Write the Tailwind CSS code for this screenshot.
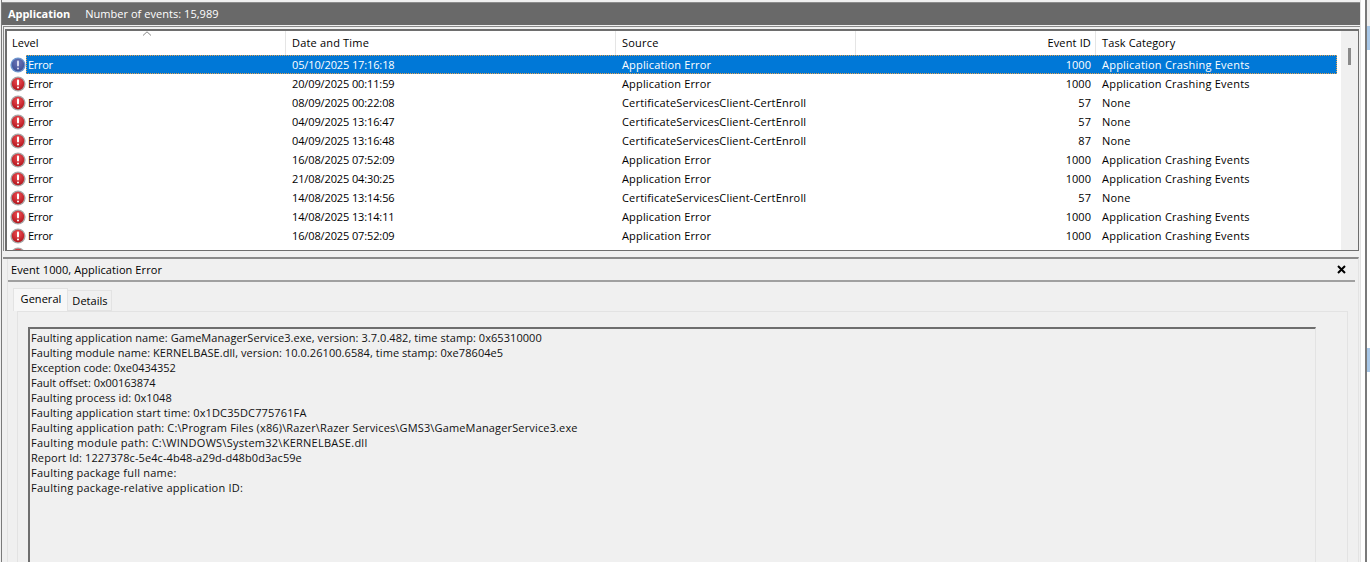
<!DOCTYPE html>
<html lang="en">

<head>
  <meta charset="UTF-8">
  <title>Application - Event Viewer</title>
  <script src="https://cdn.jsdelivr.net/npm/@tailwindcss/browser@4"></script>
</head>

<body class="w-[1370px] h-[562px] overflow-hidden bg-[#f0f0f0] text-[11px] tracking-[0.042px] leading-[15px] text-black font-['Open_Sans','Liberation_Sans',sans-serif]">
  <svg class="absolute w-0 h-0">
    <defs>
      <radialGradient id="red" cx="50%" cy="30%" r="70%">
        <stop offset="0" stop-color="#ee4f55" />
        <stop offset="1" stop-color="#b3141b" />
      </radialGradient>
      <radialGradient id="blue" cx="50%" cy="30%" r="70%">
        <stop offset="0" stop-color="#6c76b8" />
        <stop offset="1" stop-color="#3f4f94" />
      </radialGradient>
      <symbol id="err" viewBox="0 0 16 16">
        <circle cx="8" cy="8" r="7.6" fill="#a8a8a8" />
        <circle cx="8" cy="8" r="6.2" fill="url(#red)" />
        <rect x="7" y="3.4" width="2" height="6" rx="0.8" fill="#fff" />
        <rect x="7" y="10.6" width="2" height="2" rx="1" fill="#fff" />
      </symbol>
      <symbol id="err-sel" viewBox="0 0 16 16">
        <circle cx="8" cy="8" r="7.6" fill="#6f97cf" />
        <circle cx="8" cy="8" r="6.2" fill="url(#blue)" />
        <rect x="7" y="3.4" width="2" height="6" rx="0.8" fill="#dcdcf0" />
        <rect x="7" y="10.6" width="2" height="2" rx="1" fill="#dcdcf0" />
      </symbol>
    </defs>
  </svg>

  <div class="flex h-full">
    <div class="ml-[1px] w-[1360px] shrink-0 pt-[2px] border-l border-r border-l-[#7a7a7a] border-r-[#e3e3e3]">
      <!-- title bar -->
      <div class="h-[23px] w-[1358px] bg-[#696969] border-t border-[#8c8c8c] text-white flex items-center pl-[6px] pb-[2px] gap-[15px]">
        <span class="font-bold tracking-[-0.05px]">Application</span>
        <span>Number of events: 15,989</span>
      </div>

      <!-- event list -->
      <div class="mt-[1px] ml-[1px] w-[1357px] h-[225px] border-t border-l border-[#8a8a8a] pt-[2px] pl-[1px]">
        <div class="w-[1354px] h-[222px] border-2 border-[#6e6e6e] border-r border-b bg-white flex overflow-hidden">
          <div class="w-[1334px] shrink-0">
            <div class="relative h-[24px] flex items-center">
              <svg class="absolute left-[135px] top-0" width="10" height="5" viewBox="0 0 10 5" fill="none" stroke="#8a8a8a"><path d="M1 4.5 5 .8 9 4.5" /></svg>
              <div class="w-[279px] h-full pl-[5px] pb-[2px] flex items-center border-r border-[#e5e5e5]">Level</div>
              <div class="w-[330px] h-full pl-[6px] pb-[2px] flex items-center border-r border-[#e5e5e5] tracking-[0.18px]">Date and Time</div>
              <div class="w-[240px] h-full pl-[6px] pb-[2px] flex items-center border-r border-[#e5e5e5] tracking-[0.2px]">Source</div>
              <div class="w-[240px] h-full pr-[4px] pb-[2px] flex items-center justify-end border-r border-[#e5e5e5] tracking-[0.15px]">Event ID</div>
              <div class="pl-[6px] pb-[2px] tracking-[0.12px]">Task Category</div>
            </div>

            <div class="w-[1330px] h-[19px] flex items-center">
              <svg class="w-[16px] h-[16px] ml-[3px] shrink-0"><use href="#err-sel" /></svg>
              <div class="flex items-center h-full flex-1 bg-[#0078d7] text-white outline-1 -outline-offset-1 outline-dotted outline-[#e0a050]">
                <div class="w-[260px] pl-[2px] tracking-[-0.3px]">Error</div>
                <div class="w-[330px] pl-[6px] tracking-[-0.12px]">05/10/2025 17:16:18</div>
                <div class="w-[240px] pl-[6px] tracking-[0.16px]">Application Error</div>
                <div class="w-[240px] pr-[5px] text-right">1000</div>
                <div class="pl-[6px] tracking-[0.22px]">Application Crashing Events</div>
              </div>
            </div>

            <div class="h-[19px] flex items-center">
              <svg class="w-[16px] h-[16px] ml-[3px] shrink-0"><use href="#err" /></svg>
              <div class="w-[260px] pl-[2px] tracking-[-0.3px]">Error</div>
              <div class="w-[330px] pl-[6px] tracking-[-0.12px]">20/09/2025 00:11:59</div>
              <div class="w-[240px] pl-[6px] tracking-[0.16px]">Application Error</div>
              <div class="w-[240px] pr-[5px] text-right">1000</div>
              <div class="pl-[6px] tracking-[0.22px]">Application Crashing Events</div>
            </div>
            <div class="h-[19px] flex items-center">
              <svg class="w-[16px] h-[16px] ml-[3px] shrink-0"><use href="#err" /></svg>
              <div class="w-[260px] pl-[2px] tracking-[-0.3px]">Error</div>
              <div class="w-[330px] pl-[6px] tracking-[-0.12px]">08/09/2025 00:22:08</div>
              <div class="w-[240px] pl-[6px] tracking-[0.18px]">CertificateServicesClient-CertEnroll</div>
              <div class="w-[240px] pr-[5px] text-right">57</div>
              <div class="pl-[6px] tracking-[0.2px]">None</div>
            </div>
            <div class="h-[19px] flex items-center">
              <svg class="w-[16px] h-[16px] ml-[3px] shrink-0"><use href="#err" /></svg>
              <div class="w-[260px] pl-[2px] tracking-[-0.3px]">Error</div>
              <div class="w-[330px] pl-[6px] tracking-[-0.12px]">04/09/2025 13:16:47</div>
              <div class="w-[240px] pl-[6px] tracking-[0.18px]">CertificateServicesClient-CertEnroll</div>
              <div class="w-[240px] pr-[5px] text-right">57</div>
              <div class="pl-[6px] tracking-[0.2px]">None</div>
            </div>
            <div class="h-[19px] flex items-center">
              <svg class="w-[16px] h-[16px] ml-[3px] shrink-0"><use href="#err" /></svg>
              <div class="w-[260px] pl-[2px] tracking-[-0.3px]">Error</div>
              <div class="w-[330px] pl-[6px] tracking-[-0.12px]">04/09/2025 13:16:48</div>
              <div class="w-[240px] pl-[6px] tracking-[0.18px]">CertificateServicesClient-CertEnroll</div>
              <div class="w-[240px] pr-[5px] text-right">87</div>
              <div class="pl-[6px] tracking-[0.2px]">None</div>
            </div>
            <div class="h-[19px] flex items-center">
              <svg class="w-[16px] h-[16px] ml-[3px] shrink-0"><use href="#err" /></svg>
              <div class="w-[260px] pl-[2px] tracking-[-0.3px]">Error</div>
              <div class="w-[330px] pl-[6px] tracking-[-0.12px]">16/08/2025 07:52:09</div>
              <div class="w-[240px] pl-[6px] tracking-[0.16px]">Application Error</div>
              <div class="w-[240px] pr-[5px] text-right">1000</div>
              <div class="pl-[6px] tracking-[0.22px]">Application Crashing Events</div>
            </div>
            <div class="h-[19px] flex items-center">
              <svg class="w-[16px] h-[16px] ml-[3px] shrink-0"><use href="#err" /></svg>
              <div class="w-[260px] pl-[2px] tracking-[-0.3px]">Error</div>
              <div class="w-[330px] pl-[6px] tracking-[-0.12px]">21/08/2025 04:30:25</div>
              <div class="w-[240px] pl-[6px] tracking-[0.16px]">Application Error</div>
              <div class="w-[240px] pr-[5px] text-right">1000</div>
              <div class="pl-[6px] tracking-[0.22px]">Application Crashing Events</div>
            </div>
            <div class="h-[19px] flex items-center">
              <svg class="w-[16px] h-[16px] ml-[3px] shrink-0"><use href="#err" /></svg>
              <div class="w-[260px] pl-[2px] tracking-[-0.3px]">Error</div>
              <div class="w-[330px] pl-[6px] tracking-[-0.12px]">14/08/2025 13:14:56</div>
              <div class="w-[240px] pl-[6px] tracking-[0.18px]">CertificateServicesClient-CertEnroll</div>
              <div class="w-[240px] pr-[5px] text-right">57</div>
              <div class="pl-[6px] tracking-[0.2px]">None</div>
            </div>
            <div class="h-[19px] flex items-center">
              <svg class="w-[16px] h-[16px] ml-[3px] shrink-0"><use href="#err" /></svg>
              <div class="w-[260px] pl-[2px] tracking-[-0.3px]">Error</div>
              <div class="w-[330px] pl-[6px] tracking-[-0.12px]">14/08/2025 13:14:11</div>
              <div class="w-[240px] pl-[6px] tracking-[0.16px]">Application Error</div>
              <div class="w-[240px] pr-[5px] text-right">1000</div>
              <div class="pl-[6px] tracking-[0.22px]">Application Crashing Events</div>
            </div>
            <div class="h-[19px] flex items-center">
              <svg class="w-[16px] h-[16px] ml-[3px] shrink-0"><use href="#err" /></svg>
              <div class="w-[260px] pl-[2px] tracking-[-0.3px]">Error</div>
              <div class="w-[330px] pl-[6px] tracking-[-0.12px]">16/08/2025 07:52:09</div>
              <div class="w-[240px] pl-[6px] tracking-[0.16px]">Application Error</div>
              <div class="w-[240px] pr-[5px] text-right">1000</div>
              <div class="pl-[6px] tracking-[0.22px]">Application Crashing Events</div>
            </div>
            <div class="h-[19px] flex items-center">
              <svg class="w-[16px] h-[16px] ml-[3px] shrink-0"><use href="#err" /></svg>
            </div>
          </div>
          <!-- scrollbar -->
          <div class="w-[17px] bg-[#f0f0f0] pt-[17px] pl-[7px]">
            <div class="w-[3px] h-[17px] bg-[#8a8a8a]"></div>
          </div>
        </div>
      </div>

      <!-- event detail -->
      <div class="mt-[6px] ml-[1px] w-[1356px] h-[305px] border-t-2 border-r border-[#8a8a8a] border-r-[#e3e3e3] pl-[4px] overflow-hidden">
        <div class="h-full border-l border-[#e3e3e3]">
          <div class="flex items-center justify-between h-[21px] pl-[3px] pr-[12px]">
            <span class="tracking-[0.08px]">Event 1000, Application Error</span>
            <svg width="9" height="9" viewBox="0 0 9 9" stroke="#000" stroke-width="2"><path d="M1 1 8 8M8 1 1 8" /></svg>
          </div>
          <div class="w-[1347px] h-[2px] bg-[#a0a0a0]"></div>

          <div class="pl-[5px] pt-[6px]">
            <div class="flex items-end h-[23px]">
              <div class="h-[23px] w-[55px] pb-[4px] pl-[1px] bg-[#f7f7f7] border border-b-0 border-[#e3e3e3] flex items-center justify-center">General</div>
              <div class="h-[21px] w-[44px] pl-[1px] border border-l-0 border-[#e3e3e3] flex items-center justify-center">Details</div>
            </div>
            <div class="ml-[4px] w-[1331px] h-[300px] border-t border-r border-l border-[#e3e3e3] pl-[10px] pt-[15px]">
              <div class="w-[1288px] h-[300px] border-t-2 border-l-2 border-[#6e6e6e] border-r border-r-[#e3e3e3] pl-[1px] pt-[1px] text-[#111]">
                <p class="tracking-[0.062px]">Faulting application name: GameManagerService3.exe, version: 3.7.0.482, time stamp: 0x65310000</p>
                <p class="tracking-[0.065px]">Faulting module name: KERNELBASE.dll, version: 10.0.26100.6584, time stamp: 0xe78604e5</p>
                <p class="tracking-[-0.04px]">Exception code: 0xe0434352</p>
                <p class="tracking-[-0.04px]">Fault offset: 0x00163874</p>
                <p class="tracking-[0.08px]">Faulting process id: 0x1048</p>
                <p class="tracking-[0.12px]">Faulting application start time: 0x1DC35DC775761FA</p>
                <p class="tracking-[0.15px]">Faulting application path: C:\Program Files (x86)\Razer\Razer Services\GMS3\GameManagerService3.exe</p>
                <p class="tracking-[0.26px]">Faulting module path: C:\WINDOWS\System32\KERNELBASE.dll</p>
                <p class="tracking-[0.08px]">Report Id: 1227378c-5e4c-4b48-a29d-d48b0d3ac59e</p>
                <p class="tracking-[0.22px]">Faulting package full name:</p>
                <p class="tracking-[0.21px]">Faulting package-relative application ID:</p>
              </div>
            </div>
          </div>
        </div>
      </div>
    </div>

    <!-- neighbouring pane edge -->
    <div class="w-[9px] shrink-0 flex">
      <div class="w-[4px] bg-white"></div>
      <div class="w-[2px] bg-[#7a7a7a]"></div>
      <div class="w-[3px] flex flex-col bg-white">
        <div class="h-[26px] bg-[#f0f0f0]"></div>
        <div class="h-[24px] bg-[#a9c8e8]"></div>
        <div class="h-[298px]"></div>
        <div class="h-[24px] bg-[#a9c8e8]"></div>
      </div>
    </div>
  </div>
</body>

</html>
